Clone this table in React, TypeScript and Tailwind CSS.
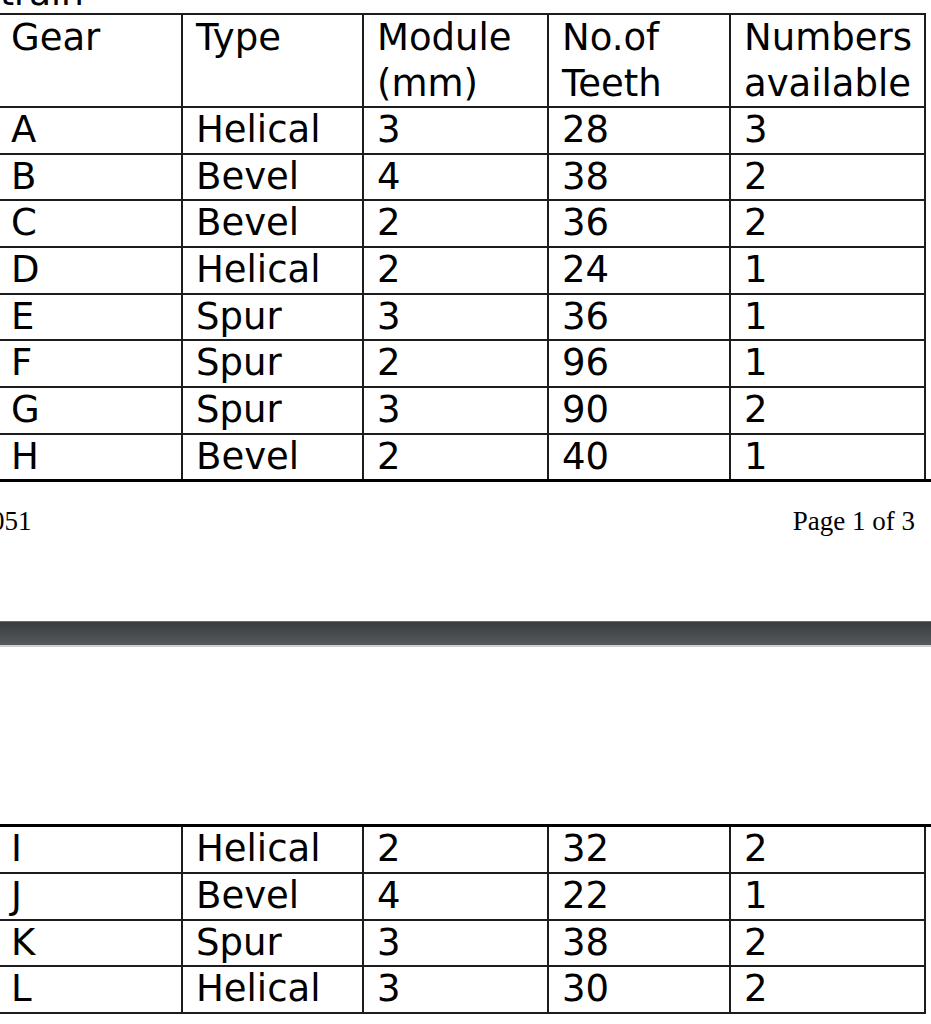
import clsx from "clsx";

const cellW = ["w-[185px]", "w-[181px]", "w-[185px]", "w-[182px]", "w-[195px]"];

const header = [
  ["Gear"],
  ["Type"],
  ["Module", "(mm)"],
  ["No.of", "Teeth"],
  ["Numbers", "available"],
];

const firstRows = [
  ["A", "Helical", "3", "28", "3"],
  ["B", "Bevel", "4", "38", "2"],
  ["C", "Bevel", "2", "36", "2"],
  ["D", "Helical", "2", "24", "1"],
  ["E", "Spur", "3", "36", "1"],
  ["F", "Spur", "2", "96", "1"],
  ["G", "Spur", "3", "90", "2"],
  ["H", "Bevel", "2", "40", "1"],
];

const secondRows = [
  ["I", "Helical", "2", "32", "2"],
  ["J", "Bevel", "4", "22", "1"],
  ["K", "Spur", "3", "38", "2"],
  ["L", "Helical", "3", "30", "2"],
];

const Row = ({ cells, last }: { cells: string[]; last?: boolean }) => (
  <div className={clsx("flex", !last && "border-b-2 border-[#1c1c1c]")}>
    {cells.map((c, i) => (
      <div
        key={i}
        className={clsx(
          cellW[i],
          "shrink-0 border-r-2 border-[#1c1c1c] pl-[13px] whitespace-nowrap leading-[44.67px]"
        )}
      >
        {c}
      </div>
    ))}
  </div>
);

export default function App() {
  return (
    <div
      className="w-[931px] h-[1024px] overflow-hidden bg-white text-black text-[37px]"
      style={{ fontFamily: '"DejaVu Sans", Verdana, sans-serif' }}
    >
      {/* tail of the heading above the table */}
      <div className="h-[13px] overflow-hidden">
        <p className="mt-[-25px] leading-[36px] text-[36px]">train</p>
      </div>

      <div className="ml-[-2px] w-[933px]">
        <div className="w-[928px] border-t-2 border-[#1c1c1c]">
          <div className="flex border-b-2 border-[#1c1c1c]">
            {header.map((lines, i) => (
              <div
                key={i}
                className={clsx(
                  cellW[i],
                  "shrink-0 border-r-2 border-[#1c1c1c] pl-[13px] whitespace-nowrap leading-[45.5px] min-h-[91px]"
                )}
              >
                {lines.map((l) => (
                  <div key={l}>{l}</div>
                ))}
              </div>
            ))}
          </div>
          {firstRows.map((r, i) => (
            <Row key={r[0]} cells={r} last={i === firstRows.length - 1} />
          ))}
        </div>
        <div className="h-[3px] bg-black" />
      </div>

      {/* page footer */}
      <div
        className="mt-[26px] flex justify-between text-[27px] leading-none pr-[16px]"
        style={{ fontFamily: '"Liberation Serif", "Times New Roman", serif' }}
      >
        <span className="ml-[-9px]">051</span>
        <span>Page 1 of 3</span>
      </div>

      {/* viewer page gap */}
      <div className="mt-[86px] h-[26px] border-t border-[#6a6c6e] border-b-2 border-b-[#cfcfcf] bg-gradient-to-b from-[#3a3d40] to-[#56595d]" />

      <div className="mt-[177px] ml-[-2px] w-[933px]">
        <div className="h-[3px] bg-black" />
        <div className="w-[928px]">
          {secondRows.map((r) => (
            <Row key={r[0]} cells={r} />
          ))}
        </div>
      </div>
    </div>
  );
}
